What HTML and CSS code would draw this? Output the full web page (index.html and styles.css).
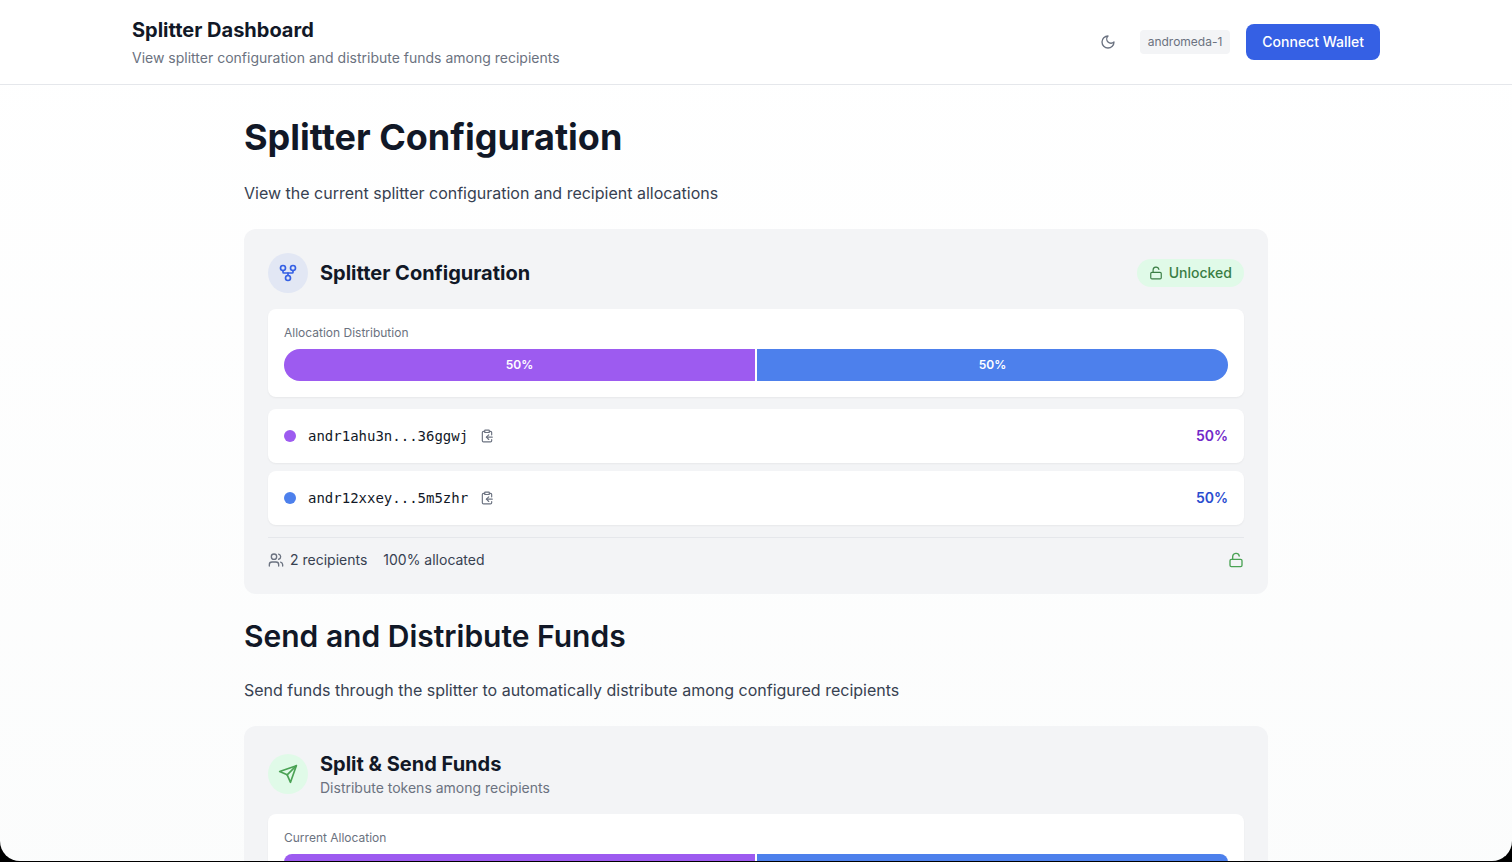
FILE: index.html
```html
<!DOCTYPE html>
<html lang="en">
<head>
    <meta charset="UTF-8">
    <meta name="viewport" content="width=device-width, initial-scale=1.0">
    <title>Splitter Dashboard</title>
    <link rel="stylesheet" href="styles.css">
</head>
<body>
    <!-- Shared icons -->
    <svg class="sprite" aria-hidden="true">
        <symbol id="icon-moon" viewBox="0 0 24 24"><path d="M12 3a6 6 0 0 0 9 9 9 9 0 1 1-9-9Z"/></symbol>
        <symbol id="icon-fork" viewBox="0 0 24 24"><circle cx="12" cy="18" r="3"/><circle cx="6" cy="6" r="3"/><circle cx="18" cy="6" r="3"/><path d="M18 9v2c0 .6-.4 1-1 1H7c-.6 0-1-.4-1-1V9"/><path d="M12 12v3"/></symbol>
        <symbol id="icon-unlock" viewBox="0 0 24 24"><rect x="3" y="11" width="18" height="11" rx="2"/><path d="M7 11V7a5 5 0 0 1 9.9-1"/></symbol>
        <symbol id="icon-copy" viewBox="0 0 24 24"><rect x="8" y="2" width="8" height="4" rx="1"/><path d="M8 4H6a2 2 0 0 0-2 2v14a2 2 0 0 0 2 2h12a2 2 0 0 0 2-2v-2"/><path d="M16 4h2a2 2 0 0 1 2 2v4"/><path d="M21 14H11"/><path d="m15 10-4 4 4 4"/></symbol>
        <symbol id="icon-users" viewBox="0 0 24 24"><path d="M16 21v-2a4 4 0 0 0-4-4H6a4 4 0 0 0-4 4v2"/><circle cx="9" cy="7" r="4"/><path d="M22 21v-2a4 4 0 0 0-3-3.87"/><path d="M16 3.13a4 4 0 0 1 0 7.75"/></symbol>
        <symbol id="icon-send" viewBox="0 0 24 24"><path d="m22 2-7 20-4-9-9-4Z"/><path d="M22 2 11 13"/></symbol>
    </svg>

    <header class="header">
        <div class="header-inner">
            <div>
                <p class="brand">Splitter Dashboard</p>
                <p class="tagline">View splitter configuration and distribute funds among recipients</p>
            </div>
            <div class="header-actions">
                <button type="button" class="icon-button theme-toggle" aria-label="Toggle theme"><svg class="icon icon-md"><use href="#icon-moon"/></svg></button>
                <span class="chain">andromeda-1</span>
                <button type="button" class="connect">Connect Wallet</button>
            </div>
        </div>
    </header>

    <main class="main">
        <section class="section">
            <h1>Splitter Configuration</h1>
            <p class="lead">View the current splitter configuration and recipient allocations</p>

            <div class="card">
                <div class="card-header">
                    <div class="card-icon blue"><svg class="icon icon-lg"><use href="#icon-fork"/></svg></div>
                    <h3>Splitter Configuration</h3>
                    <span class="status"><svg class="icon icon-sm"><use href="#icon-unlock"/></svg>Unlocked</span>
                </div>

                <div class="panel">
                    <p class="panel-label">Allocation Distribution</p>
                    <div class="bar">
                        <div class="segment purple-bg" style="width: 50%">50%</div>
                        <div class="segment blue-bg" style="width: 50%">50%</div>
                    </div>
                </div>

                <ul class="recipients">
                    <li class="recipient">
                        <span class="dot purple-bg"></span>
                        <span class="address">andr1ahu3n...36ggwj</span>
                        <button type="button" class="icon-button copy" aria-label="Copy address"><svg class="icon icon-sm"><use href="#icon-copy"/></svg></button>
                        <span class="percent purple-text">50%</span>
                    </li>
                    <li class="recipient">
                        <span class="dot blue-bg"></span>
                        <span class="address">andr12xxey...5m5zhr</span>
                        <button type="button" class="icon-button copy" aria-label="Copy address"><svg class="icon icon-sm"><use href="#icon-copy"/></svg></button>
                        <span class="percent blue-text">50%</span>
                    </li>
                </ul>

                <div class="card-footer">
                    <span class="count"><svg class="icon icon-md"><use href="#icon-users"/></svg>2 recipients</span>
                    <span>100% allocated</span>
                    <svg class="icon icon-md footer-lock"><use href="#icon-unlock"/></svg>
                </div>
            </div>
        </section>

        <section class="section">
            <h2>Send and Distribute Funds</h2>
            <p class="lead">Send funds through the splitter to automatically distribute among configured recipients</p>

            <div class="card">
                <div class="card-header">
                    <div class="card-icon green"><svg class="icon icon-lg"><use href="#icon-send"/></svg></div>
                    <div>
                        <h3>Split &amp; Send Funds</h3>
                        <p class="card-subtitle">Distribute tokens among recipients</p>
                    </div>
                </div>

                <div class="panel">
                    <p class="panel-label">Current Allocation</p>
                    <div class="bar bar-small">
                        <div class="segment purple-bg" style="width: 50%"></div>
                        <div class="segment blue-bg" style="width: 50%"></div>
                    </div>
                </div>
            </div>
        </section>
    </main>

    <div class="window-frame"></div>
</body>
</html>
```
FILE: styles.css
```css
* {
    box-sizing: border-box;
    margin: 0;
    padding: 0;
}
html {
    scrollbar-width: none;
}
body {
    font-family: Inter, "Liberation Sans", sans-serif;
    font-size: 14px;
    line-height: 20px;
    color: #111827;
    background: linear-gradient(#ffffff, #fbfcfc);
}
button {
    font: inherit;
    border: none;
    cursor: pointer;
}
.sprite {
    display: none;
}

/* Icons */
.icon {
    display: block;
    flex-shrink: 0;
    fill: none;
    stroke: currentColor;
    stroke-width: 2;
    stroke-linecap: round;
    stroke-linejoin: round;
}
.icon-sm {
    width: 14px;
    height: 14px;
}
.icon-md {
    width: 16px;
    height: 16px;
}
.icon-lg {
    width: 20px;
    height: 20px;
}
.icon-button {
    display: flex;
    align-items: center;
    justify-content: center;
    background: none;
    color: #6b7280;
}

/* Header */
.header {
    background-color: #fff;
    border-bottom: 1px solid #e5e7eb;
}
.header-inner {
    display: flex;
    align-items: center;
    justify-content: space-between;
    max-width: 1280px;
    margin: 0 auto;
    padding: 16px;
}
.brand {
    font-size: 20px;
    line-height: 28px;
    font-weight: 700;
    margin-bottom: 4px;
}
.tagline,
.card-subtitle {
    color: #6b7280;
}
.header-actions {
    display: flex;
    align-items: center;
    gap: 16px;
}
.theme-toggle {
    width: 32px;
    height: 32px;
}
.chain {
    padding: 4px 8px;
    border-radius: 4px;
    background-color: #f3f4f6;
    color: #6b7280;
    font-size: 12px;
    line-height: 16px;
}
.connect {
    padding: 8px 16px;
    border-radius: 8px;
    background-color: #3560e4;
    color: #fff;
    font-weight: 500;
}

/* Content */
.main {
    max-width: 1024px;
    margin: 0 auto;
    padding: 32px 0;
}
.section + .section {
    margin-top: 24px;
}
h1 {
    font-size: 36px;
    line-height: 40px;
    font-weight: 700;
}
h2 {
    font-size: 30px;
    line-height: 36px;
    font-weight: 600;
}
h3 {
    font-size: 20px;
    line-height: 28px;
    font-weight: 700;
}
.lead {
    margin: 24px 0;
    font-size: 16px;
    line-height: 24px;
    color: #374151;
}
.card {
    padding: 24px;
    border-radius: 12px;
    background-color: #f3f4f6;
}
.card-header {
    display: flex;
    align-items: center;
    gap: 12px;
    margin-bottom: 16px;
}
.card-icon {
    display: flex;
    align-items: center;
    justify-content: center;
    width: 40px;
    height: 40px;
    border-radius: 50%;
}
.card-icon.blue {
    background-color: #e2e7f4;
    color: #3560e4;
}
.card-icon.green {
    background-color: #e0fae8;
    color: #4aa254;
}
.status {
    display: flex;
    align-items: center;
    gap: 6px;
    margin-left: auto;
    padding: 4px 12px;
    border-radius: 14px;
    background-color: #e0fae8;
    color: #3a7d44;
    font-weight: 500;
}
.panel,
.recipient {
    padding: 16px;
    border-radius: 8px;
    background-color: #fff;
    box-shadow: 0 1px 2px rgba(0, 0, 0, 0.05);
}
.panel-label {
    margin-bottom: 8px;
    font-size: 12px;
    line-height: 16px;
    color: #6b7280;
}
.bar {
    display: flex;
    gap: 2px;
    height: 32px;
    border-radius: 16px;
    overflow: hidden;
}
.bar-small {
    height: 16px;
    border-radius: 8px;
}
.segment {
    display: flex;
    align-items: center;
    justify-content: center;
    color: #fff;
    font-size: 12px;
    font-weight: 600;
}
.purple-bg {
    background-color: #9d5bf0;
}
.blue-bg {
    background-color: #4d80ec;
}
.purple-text {
    color: #7028c8;
}
.blue-text {
    color: #2a4ccf;
}

/* Recipients */
.recipients {
    display: flex;
    flex-direction: column;
    gap: 8px;
    margin: 12px 0;
    list-style: none;
}
.recipient {
    display: flex;
    align-items: center;
    gap: 12px;
}
.dot {
    width: 12px;
    height: 12px;
    border-radius: 50%;
}
.address {
    font-family: "DejaVu Sans Mono", monospace;
}
.copy {
    height: 22px;
}
.percent {
    margin-left: auto;
    font-weight: 600;
}
.card-footer {
    display: flex;
    align-items: center;
    gap: 16px;
    padding-top: 12px;
    border-top: 1px solid #e5e7eb;
    color: #374151;
}
.count {
    display: flex;
    align-items: center;
    gap: 6px;
}
.count .icon {
    color: #6b7280;
}
.footer-lock {
    margin-left: auto;
    color: #4aa254;
}

/* Rounded window edge */
.window-frame {
    position: fixed;
    inset: 0 0 1px;
    border-radius: 0 0 20px 20px;
    box-shadow: 0 0 0 20px #000;
    pointer-events: none;
}
```
